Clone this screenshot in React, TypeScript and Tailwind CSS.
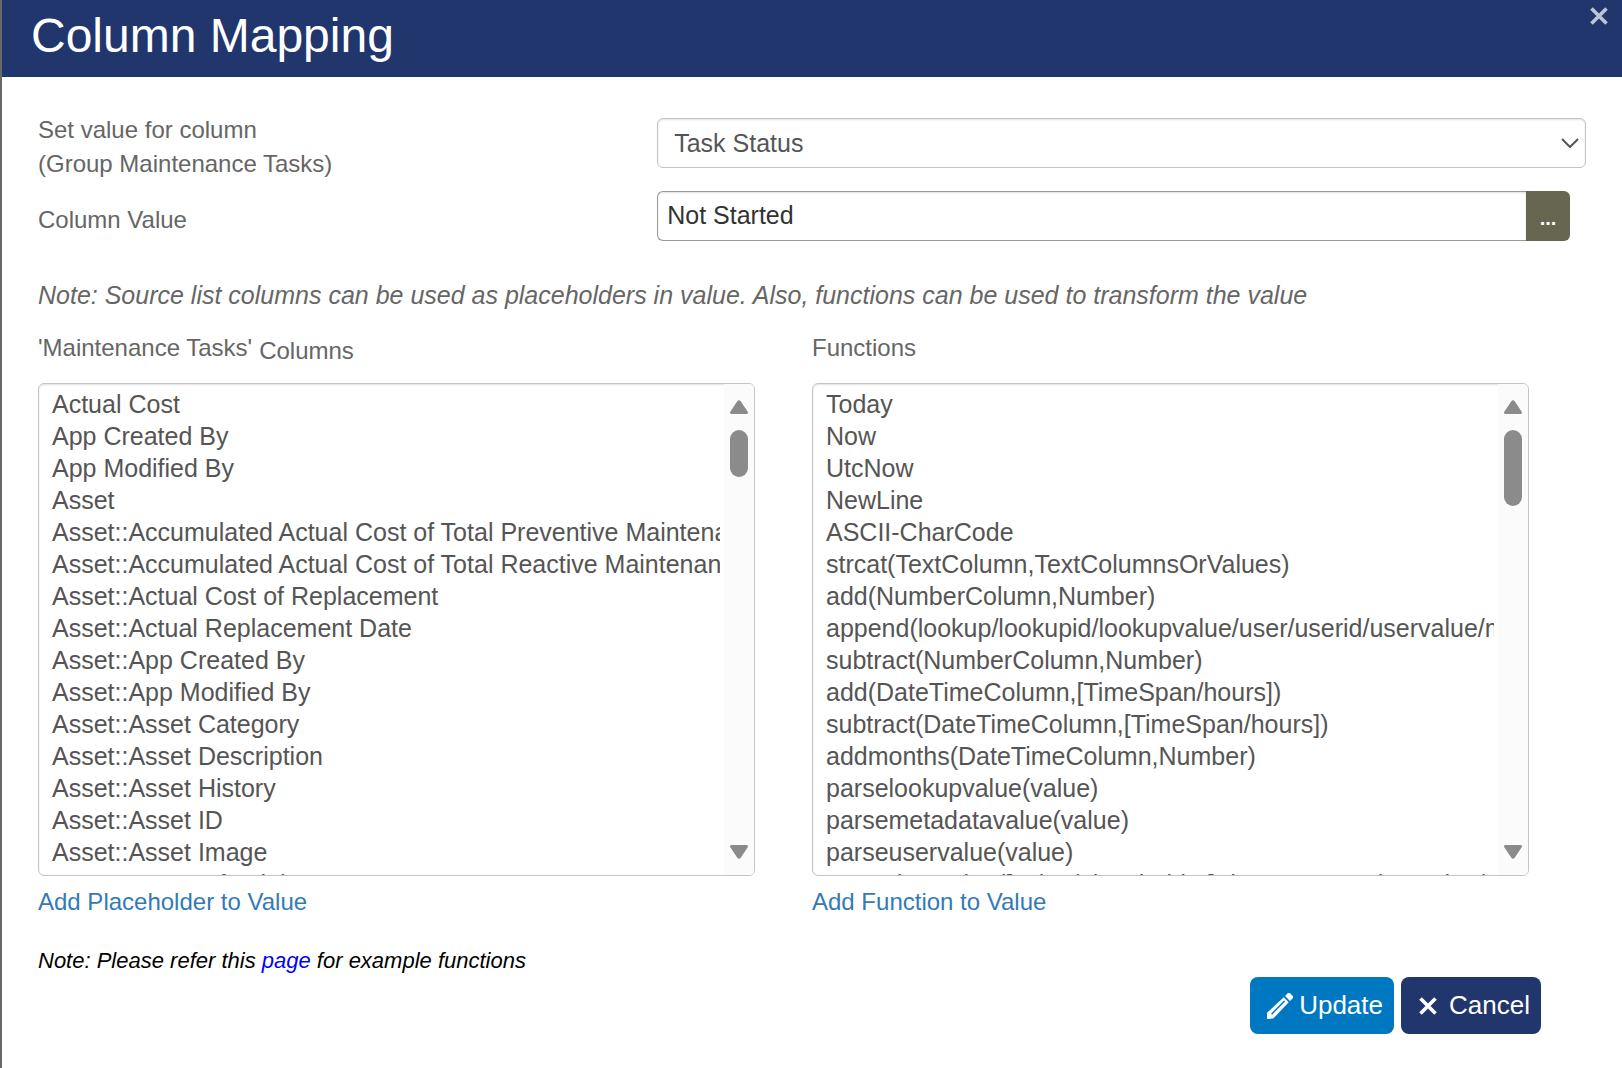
import React, { useState } from 'react';

const SOURCE_COLUMNS = [
  'Actual Cost',
  'App Created By',
  'App Modified By',
  'Asset',
  'Asset::Accumulated Actual Cost of Total Preventive Maintenance',
  'Asset::Accumulated Actual Cost of Total Reactive Maintenance',
  'Asset::Actual Cost of Replacement',
  'Asset::Actual Replacement Date',
  'Asset::App Created By',
  'Asset::App Modified By',
  'Asset::Asset Category',
  'Asset::Asset Description',
  'Asset::Asset History',
  'Asset::Asset ID',
  'Asset::Asset Image',
  'Asset::Asset Info Link',
];

const FUNCTIONS = [
  'Today',
  'Now',
  'UtcNow',
  'NewLine',
  'ASCII-CharCode',
  'strcat(TextColumn,TextColumnsOrValues)',
  'add(NumberColumn,Number)',
  'append(lookup/lookupid/lookupvalue/user/userid/uservalue/metadata)',
  'subtract(NumberColumn,Number)',
  'add(DateTimeColumn,[TimeSpan/hours])',
  'subtract(DateTimeColumn,[TimeSpan/hours])',
  'addmonths(DateTimeColumn,Number)',
  'parselookupvalue(value)',
  'parsemetadatavalue(value)',
  'parseuservalue(value)',
  'parsedatevalue([value/placeholder],datecustomvalue,value/Type)',
];

const CrossIcon = () => (
  <svg viewBox="0 0 18 18" className="size-[18px]" fill="none" stroke="currentColor" strokeWidth="3.6" aria-hidden="true">
    <path d="M1.5 1.5 16.5 16.5M16.5 1.5 1.5 16.5" />
  </svg>
);

const PencilIcon = () => (
  <svg viewBox="0 0 26 26" className="size-[26px]" fill="currentColor" aria-hidden="true">
    <path d="M20.500.6a2 2 0 0 1 2.800 0l2.200 2.200a2 2 0 0 1 0 2.800L23 8 18.100 3z" />
    <path
      fillRule="evenodd"
      d="M16.800 4.300 21.700 9.300 6.200 25.600 0 26 0 19.800zM17 7.400 4 20.700 5.100 21.800 18.100 8.500z"
    />
  </svg>
);

type ListBoxProps = {
  id: string;
  items: string[];
  thumbClass: string;
};

const ListBox = ({ id, items, thumbClass }: ListBoxProps) => (
  <div className="mr-[57px] flex h-[493px] overflow-hidden rounded-md border border-[#c4c4c4] shadow-[inset_0_1px_2px_rgba(0,0,0,0.12)]">
    <select
      id={id}
      size={15}
      className="mr-1 h-full min-w-0 flex-1 overflow-x-hidden bg-transparent pt-[6px] pl-[11px] text-[25px] text-[#555] outline-none [scrollbar-width:none]"
    >
      {items.map((item) => (
        <option key={item} className="h-8 px-[2px] py-0 leading-8">
          {item}
        </option>
      ))}
    </select>
    <div className="flex w-[30px] flex-col items-center bg-[#fbfbfb] py-4 text-[#8b8b8b]" aria-hidden="true">
      <svg viewBox="0 0 18 14" className="h-3.5 w-[18px]" fill="currentColor">
        <path d="M7.300 1.200a2 2 0 0 1 3.400 0l7 10.600a1.400 1.400 0 0 1-1.200 2.200h-15a1.400 1.400 0 0 1-1.200-2.200z" />
      </svg>
      <div className={`mt-4 w-[18px] rounded-full bg-[#8b8b8b] ${thumbClass}`} />
      <svg viewBox="0 0 18 14" className="mt-auto h-3.5 w-[18px]" fill="currentColor">
        <path d="M7.300 12.800a2 2 0 0 0 3.400 0l7-10.600a1.400 1.400 0 0 0-1.200-2.200h-15a1.400 1.400 0 0 0-1.200 2.200z" />
      </svg>
    </div>
  </div>
);

export default function App() {
  const [value, setValue] = useState('Not Started');

  return (
    <div className="min-h-screen border-l-2 border-[#686868] bg-white font-['Liberation_Sans',Arial,sans-serif] text-2xl text-[#666]">
      <header className="flex h-[77px] items-start justify-between bg-[#20366d] pr-3.5 pl-[29px]">
        <h1 className="pt-1 text-5xl leading-[64px] text-white">Column Mapping</h1>
        <button type="button" aria-label="Close" className="pt-[7px] text-[#bcc3d4]">
          <CrossIcon />
        </button>
      </header>

      <main className="px-9 pt-9">
        {/* Target column and its value */}
        <div className="flex">
          <label htmlFor="column" className="w-2/5 leading-[34px]">
            Set value for column
            <br />
            (Group Maintenance Tasks)
          </label>
          <div className="relative w-3/5 pt-[5px]">
            <select
              id="column"
              className="h-[50px] w-full appearance-none rounded-md border border-[#c4c4c4] pt-[2px] pl-4 text-[25px] text-[#555] shadow-[inset_0_1px_2px_rgba(0,0,0,0.12)]"
            >
              <option>Task Status</option>
            </select>
            <svg viewBox="0 0 18 10" className="pointer-events-none absolute top-[25px] right-[7px] h-2.5 w-[18px]" fill="none" stroke="#555" strokeWidth="2" aria-hidden="true">
              <path d="M1 1 9 9 17 1" />
            </svg>
          </div>
        </div>
        <div className="mt-[10px] flex">
          <label htmlFor="value" className="w-2/5 pt-3 leading-[34px]">
            Column Value
          </label>
          <div className="flex w-3/5 pr-4">
            <input
              id="value"
              value={value}
              onChange={(e) => setValue(e.target.value)}
              className="h-[50px] min-w-0 flex-1 rounded-l-md border border-r-0 border-[#999] px-[9px] pb-[2px] text-[25px] text-[#333] shadow-[inset_0_1px_2px_rgba(0,0,0,0.12)]"
            />
            <button type="button" aria-label="Edit value" className="h-[50px] w-11 rounded-r-md bg-[#666651] pt-1 text-xl font-bold text-white">
              ...
            </button>
          </div>
        </div>

        <p className="mt-[37px] text-[25px] leading-[34px] italic">
          Note: Source list columns can be used as placeholders in value. Also, functions can be used to transform the value
        </p>

        {/* Placeholder and function pickers */}
        <div className="mt-[19px] grid grid-cols-2">
          <section>
            <label htmlFor="columns" className="flex h-[52px] items-start gap-[7px]">
              <span className="leading-[34px]">'Maintenance Tasks'</span>
              <span className="leading-10">Columns</span>
            </label>
            <ListBox id="columns" items={SOURCE_COLUMNS} thumbClass="h-[47px]" />
            <a href="#" className="mt-[9px] inline-block leading-[34px] text-[#337ab7]">
              Add Placeholder to Value
            </a>
          </section>
          <section>
            <label htmlFor="functions" className="block h-[52px] leading-[34px]">
              Functions
            </label>
            <ListBox id="functions" items={FUNCTIONS} thumbClass="h-[76px]" />
            <a href="#" className="mt-[9px] inline-block leading-[34px] text-[#337ab7]">
              Add Function to Value
            </a>
          </section>
        </div>

        <p className="mt-[26px] text-[22px] leading-8 text-black italic">
          Note: Please refer this <a href="#" className="text-[#0000ff]">page</a> for example functions
        </p>

        <div className="flex justify-end gap-[7px] pr-[45px] text-[26px] text-white">
          <button type="submit" className="flex h-[57px] w-36 items-center justify-end gap-1.5 rounded-lg bg-[#0078c1] pr-[11px]">
            <PencilIcon />
            Update
          </button>
          <button type="button" className="flex h-[57px] w-[140px] items-center justify-end gap-3 rounded-lg bg-[#20366d] pr-[11px]">
            <CrossIcon />
            Cancel
          </button>
        </div>
      </main>
    </div>
  );
}
